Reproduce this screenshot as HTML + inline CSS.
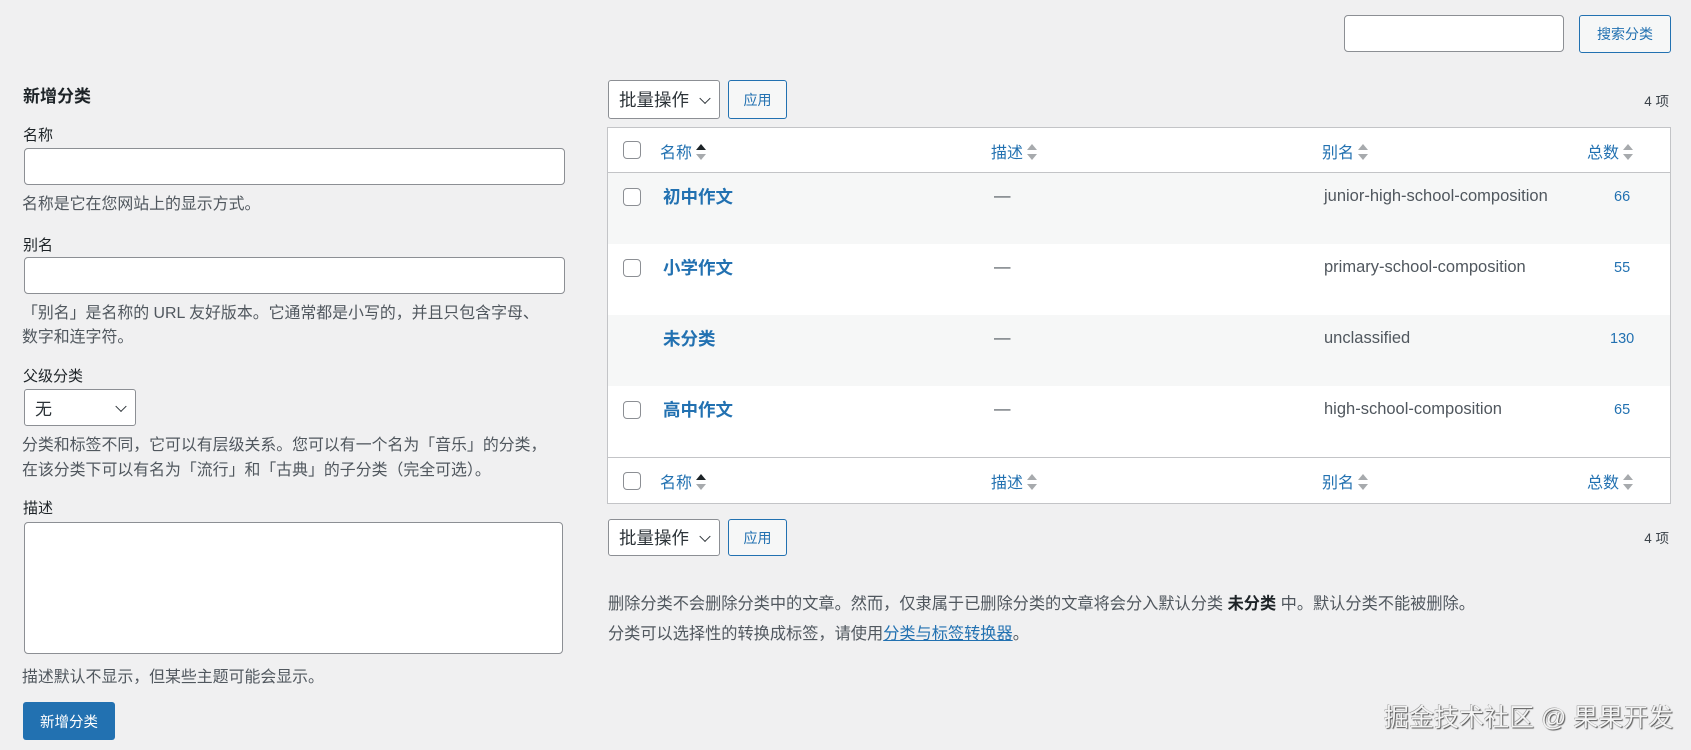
<!DOCTYPE html>
<html><head><meta charset="utf-8"><style>
*{box-sizing:border-box;margin:0;padding:0}
body{width:1691px;height:750px;background:#f0f0f1;font-family:"Liberation Sans","Noto Sans CJK SC",sans-serif;font-size:14px;color:#3c434a;position:relative;overflow:hidden}
.a{position:absolute;white-space:nowrap}
.inp{position:absolute;background:#fff;border:1px solid #8c8f94;border-radius:4px}
.btn2{position:absolute;border:1px solid #2271b1;color:#2271b1;background:#f6f7f7;border-radius:3px;font-size:14px;display:flex;align-items:center;justify-content:center}
.sel{position:absolute;background:#fff;border:1px solid #8c8f94;border-radius:3px;font-size:17.5px;color:#2c3338;display:flex;align-items:center;padding-left:10px}
.chev{position:absolute;right:10px;top:50%;width:8px;height:8px;border-right:1.5px solid #2c3338;border-bottom:1.5px solid #2c3338;transform:translateY(-70%) rotate(45deg)}
.lab{font-size:15px;color:#1d2327}
.help{font-size:15.9px;color:#50575e}
.cb{position:absolute;width:18px;height:18px;border:1px solid #8c8f94;border-radius:4px;background:#fff}
.th{position:absolute;color:#2271b1;font-size:16px}
.sort{display:inline-block;vertical-align:middle;margin-left:4px;width:10px;height:20px;position:relative;top:-2px}
.sort:before{content:"";position:absolute;left:0;top:2px;border:5px solid transparent;border-bottom:6px solid #a7aaad;border-top:0}
.sort:after{content:"";position:absolute;left:0;top:12px;border:5px solid transparent;border-top:6px solid #a7aaad;border-bottom:0}
.sort.on:before{border-bottom-color:#1d2327}
.nm{position:absolute;color:#2271b1;font-weight:bold;font-size:17.5px}
.td{position:absolute;font-size:16.5px;color:#50575e}
.ct{position:absolute;font-size:14.5px;color:#2271b1}
.bt{font-size:16.2px}
</style></head><body>
<div class="inp" style="left:1344px;top:15px;width:220px;height:37px"></div>
<div class="btn2" style="left:1579px;top:15px;width:92px;height:38px">搜索分类</div>

<div class="a" style="left:23px;top:82px;font-size:17px;font-weight:bold;color:#1d2327">新增分类</div>
<div class="a lab" style="left:23px;top:124px">名称</div>
<div class="inp" style="left:24px;top:148px;width:541px;height:37px"></div>
<div class="a help" style="left:22px;top:191px">名称是它在您网站上的显示方式。</div>
<div class="a lab" style="left:23px;top:234px">别名</div>
<div class="inp" style="left:24px;top:257px;width:541px;height:37px"></div>
<div class="a help" style="left:22px;top:300px">「别名」是名称的 URL 友好版本。它通常都是小写的，并且只包含字母、</div>
<div class="a help" style="left:22px;top:324px">数字和连字符。</div>
<div class="a lab" style="left:23px;top:365px">父级分类</div>
<div class="sel" style="left:24px;top:389px;width:112px;height:37px;font-size:17px">无<span class="chev"></span></div>
<div class="a help" style="left:22px;top:432px">分类和标签不同，它可以有层级关系。您可以有一个名为「音乐」的分类，</div>
<div class="a help" style="left:22px;top:457px">在该分类下可以有名为「流行」和「古典」的子分类（完全可选）。</div>
<div class="a lab" style="left:23px;top:497px">描述</div>
<div class="inp" style="left:24px;top:522px;width:539px;height:132px"></div>
<div class="a help" style="left:22px;top:664px">描述默认不显示，但某些主题可能会显示。</div>
<div class="a" style="left:23px;top:702px;width:92px;height:38px;background:#2271b1;color:#fff;border-radius:3px;display:flex;align-items:center;justify-content:center;font-size:14.5px">新增分类</div>

<div class="sel" style="left:608px;top:80px;width:112px;height:39px">批量操作<span class="chev"></span></div>
<div class="btn2" style="left:728px;top:80px;width:59px;height:39px">应用</div>
<div class="a" style="right:22px;top:90px;font-size:13.5px">4 项</div>

<div class="a" style="left:607px;top:127px;width:1064px;height:377px;background:#fff;border:1px solid #c3c4c7"></div>
<div class="a" style="left:608px;top:172px;width:1062px;height:1px;background:#c3c4c7"></div>
<div class="a" style="left:608px;top:173px;width:1062px;height:71px;background:#f6f7f7"></div>
<div class="a" style="left:608px;top:315px;width:1062px;height:71px;background:#f6f7f7"></div>
<div class="a" style="left:608px;top:457px;width:1062px;height:1px;background:#c3c4c7"></div>

<div class="cb" style="left:623px;top:141px"></div>
<div class="th" style="left:660px;top:139px">名称<span class="sort on"></span></div>
<div class="th" style="left:991px;top:139px">描述<span class="sort"></span></div>
<div class="th" style="left:1322px;top:139px">别名<span class="sort"></span></div>
<div class="th" style="left:1587px;top:139px">总数<span class="sort"></span></div>

<div class="cb" style="left:623px;top:188px"></div>
<div class="nm" style="left:663px;top:184px">初中作文</div>
<div class="td" style="left:994px;top:187px">—</div>
<div class="td" style="left:1324px;top:187px">junior-high-school-composition</div>
<div class="ct" style="left:1614px;top:189px">66</div>

<div class="cb" style="left:623px;top:259px"></div>
<div class="nm" style="left:663px;top:255px">小学作文</div>
<div class="td" style="left:994px;top:258px">—</div>
<div class="td" style="left:1324px;top:258px">primary-school-composition</div>
<div class="ct" style="left:1614px;top:260px">55</div>

<div class="nm" style="left:663px;top:326px">未分类</div>
<div class="td" style="left:994px;top:329px">—</div>
<div class="td" style="left:1324px;top:329px">unclassified</div>
<div class="ct" style="left:1610px;top:331px">130</div>

<div class="cb" style="left:623px;top:401px"></div>
<div class="nm" style="left:663px;top:397px">高中作文</div>
<div class="td" style="left:994px;top:400px">—</div>
<div class="td" style="left:1324px;top:400px">high-school-composition</div>
<div class="ct" style="left:1614px;top:402px">65</div>

<div class="cb" style="left:623px;top:472px"></div>
<div class="th" style="left:660px;top:469px">名称<span class="sort on"></span></div>
<div class="th" style="left:991px;top:469px">描述<span class="sort"></span></div>
<div class="th" style="left:1322px;top:469px">别名<span class="sort"></span></div>
<div class="th" style="left:1587px;top:469px">总数<span class="sort"></span></div>

<div class="sel" style="left:608px;top:519px;width:112px;height:37px">批量操作<span class="chev"></span></div>
<div class="btn2" style="left:728px;top:519px;width:59px;height:37px">应用</div>
<div class="a" style="right:22px;top:527px;font-size:13.5px">4 项</div>

<div class="a help bt" style="left:608px;top:590px">删除分类不会删除分类中的文章。然而，仅隶属于已删除分类的文章将会分入默认分类 <b style="color:#1d2327">未分类</b> 中。默认分类不能被删除。</div>
<div class="a help bt" style="left:608px;top:620px">分类可以选择性的转换成标签，请使用<span style="color:#2271b1;text-decoration:underline">分类与标签转换器</span>。</div>

<div class="a" style="left:1384px;top:698px;font-size:25px;color:#f4f4f4;text-shadow:1px 1px 1px #555,-0.5px -0.5px 0 #999">掘金技术社区 @ 果果开发</div>
</body></html>
